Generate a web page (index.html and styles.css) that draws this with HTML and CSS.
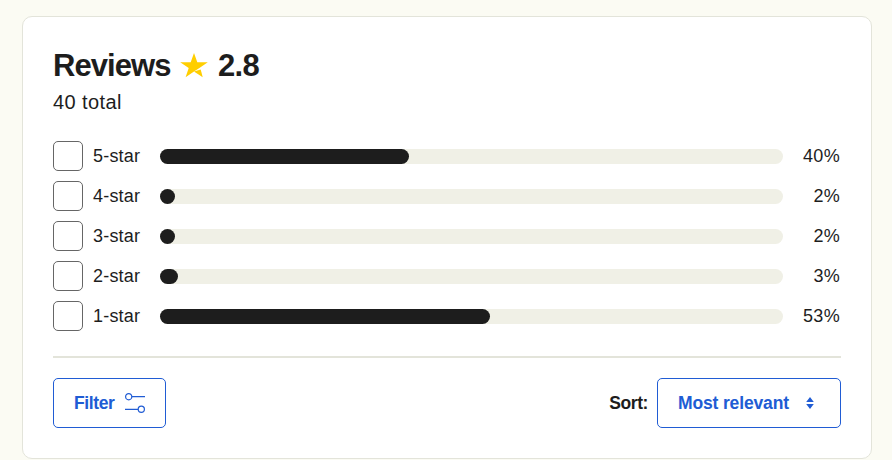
FILE: index.html
```html
<!DOCTYPE html>
<html lang="en">
<head>
    <meta charset="UTF-8">
    <meta name="viewport" content="width=device-width, initial-scale=1.0">
    <title>Reviews</title>
    <link rel="stylesheet" href="styles.css">
</head>
<body>
    <section class="reviews-card">
        <h2 class="reviews-title">
            <span class="title-text">Reviews</span>
            <svg class="star" width="28" height="25" viewBox="0 0 28 25" fill="#ffce00"><path d="M14 0l3.3 9.2H27.8l-8 5.6L14 18.6l-8.4 5.6 3.1-9.1L.2 9.2h10.5z"/><path d="M14 18.6l6.7-2 2 7.6z"/></svg>
            <span class="score">2.8</span>
        </h2>
        <p class="total">40 total</p>

        <div class="rating-list">
            <label class="rating-row">
                <input type="checkbox" class="rating-check">
                <span class="rating-label">5-star</span>
                <span class="bar"><span class="bar-fill" style="width: 40%"></span></span>
                <span class="percent">40%</span>
            </label>
            <label class="rating-row">
                <input type="checkbox" class="rating-check">
                <span class="rating-label">4-star</span>
                <span class="bar"><span class="bar-fill" style="width: 2%"></span></span>
                <span class="percent">2%</span>
            </label>
            <label class="rating-row">
                <input type="checkbox" class="rating-check">
                <span class="rating-label">3-star</span>
                <span class="bar"><span class="bar-fill" style="width: 2%"></span></span>
                <span class="percent">2%</span>
            </label>
            <label class="rating-row">
                <input type="checkbox" class="rating-check">
                <span class="rating-label">2-star</span>
                <span class="bar"><span class="bar-fill" style="width: 2.9%"></span></span>
                <span class="percent">3%</span>
            </label>
            <label class="rating-row">
                <input type="checkbox" class="rating-check">
                <span class="rating-label">1-star</span>
                <span class="bar"><span class="bar-fill" style="width: 53%"></span></span>
                <span class="percent">53%</span>
            </label>
        </div>

        <div class="toolbar">
            <button class="button filter-button">
                <span class="filter-text">Filter</span>
                <svg width="20" height="20" viewBox="0 0 20 20" fill="none" stroke="#205cd4" stroke-width="1.2"><circle cx="3.7" cy="3.7" r="3.1"/><path d="M6.8 3.7H20M0 16.3h13.2"/><circle cx="16.3" cy="16.3" r="3.1"/></svg>
            </button>
            <div class="sort">
                <span class="sort-label">Sort:</span>
                <button class="button sort-button">
                    <span class="sort-text">Most relevant</span>
                    <svg width="8" height="12" viewBox="0 0 8 12" fill="#205cd4"><path d="M4 0l3.8 5H.2zM4 12L.2 7h7.6z"/></svg>
                </button>
            </div>
        </div>
    </section>
</body>
</html>
```
FILE: styles.css
```css
* { box-sizing: border-box; }
body {
    margin: 0; padding: 16px 20px 0 22px; height: 460px; overflow: hidden;
    background: #fbfbf3; color: #1d1d1d;
    font-family: "Liberation Sans", Arial, sans-serif; font-size: 18px;
}
.reviews-card {
    height: 443px; padding: 30px; background: #fff;
    border: 1px solid #e3e4da; border-radius: 10px;
}
.reviews-title {
    display: flex; align-items: center; height: 38px; margin: 0;
    font-size: 31px; line-height: 38px;
}
.title-text { width: 127px; letter-spacing: -0.95px; }
.star { margin-bottom: 1px; }
.score { margin-left: 10px; letter-spacing: -0.7px; }
.total { margin: 5px 0 0; font-size: 20px; line-height: 24px; letter-spacing: 0.4px; }

.rating-list { display: grid; gap: 10px; margin-top: 27px; }
.rating-row { display: flex; align-items: center; height: 30px; }
.rating-check {
    appearance: none; width: 30px; height: 30px; margin: 0 10px 0 0;
    background: #fff; border: 1px solid #666; border-radius: 5px;
}
.rating-label { width: 67px; letter-spacing: 0.2px; }
.bar { width: 623px; height: 15px; border-radius: 8px; background: #f0f0e6; }
.bar-fill { display: block; height: 15px; min-width: 15px; border-radius: 8px; background: #1d1d1d; }
.percent { flex: 1; padding-right: 1px; text-align: right; letter-spacing: 0.3px; }

.toolbar {
    display: flex; justify-content: space-between;
    margin-top: 25px; padding-top: 20px; border-top: 2px solid #e3e4da;
}
.button {
    display: flex; align-items: center; height: 50px; padding: 0 20px;
    background: #fff; border: 1px solid #205cd4; border-radius: 5px;
    color: #205cd4; font: bold 17.5px "Liberation Sans", Arial, sans-serif;
}
.filter-button { width: 113px; justify-content: space-between; }
.filter-text { letter-spacing: -0.4px; }
.sort { display: flex; align-items: center; gap: 9px; }
.sort-label { font-size: 17.5px; font-weight: bold; letter-spacing: -0.4px; }
.sort-button { width: 184px; padding-right: 26px; justify-content: space-between; }
.sort-text { letter-spacing: -0.15px; }
```
